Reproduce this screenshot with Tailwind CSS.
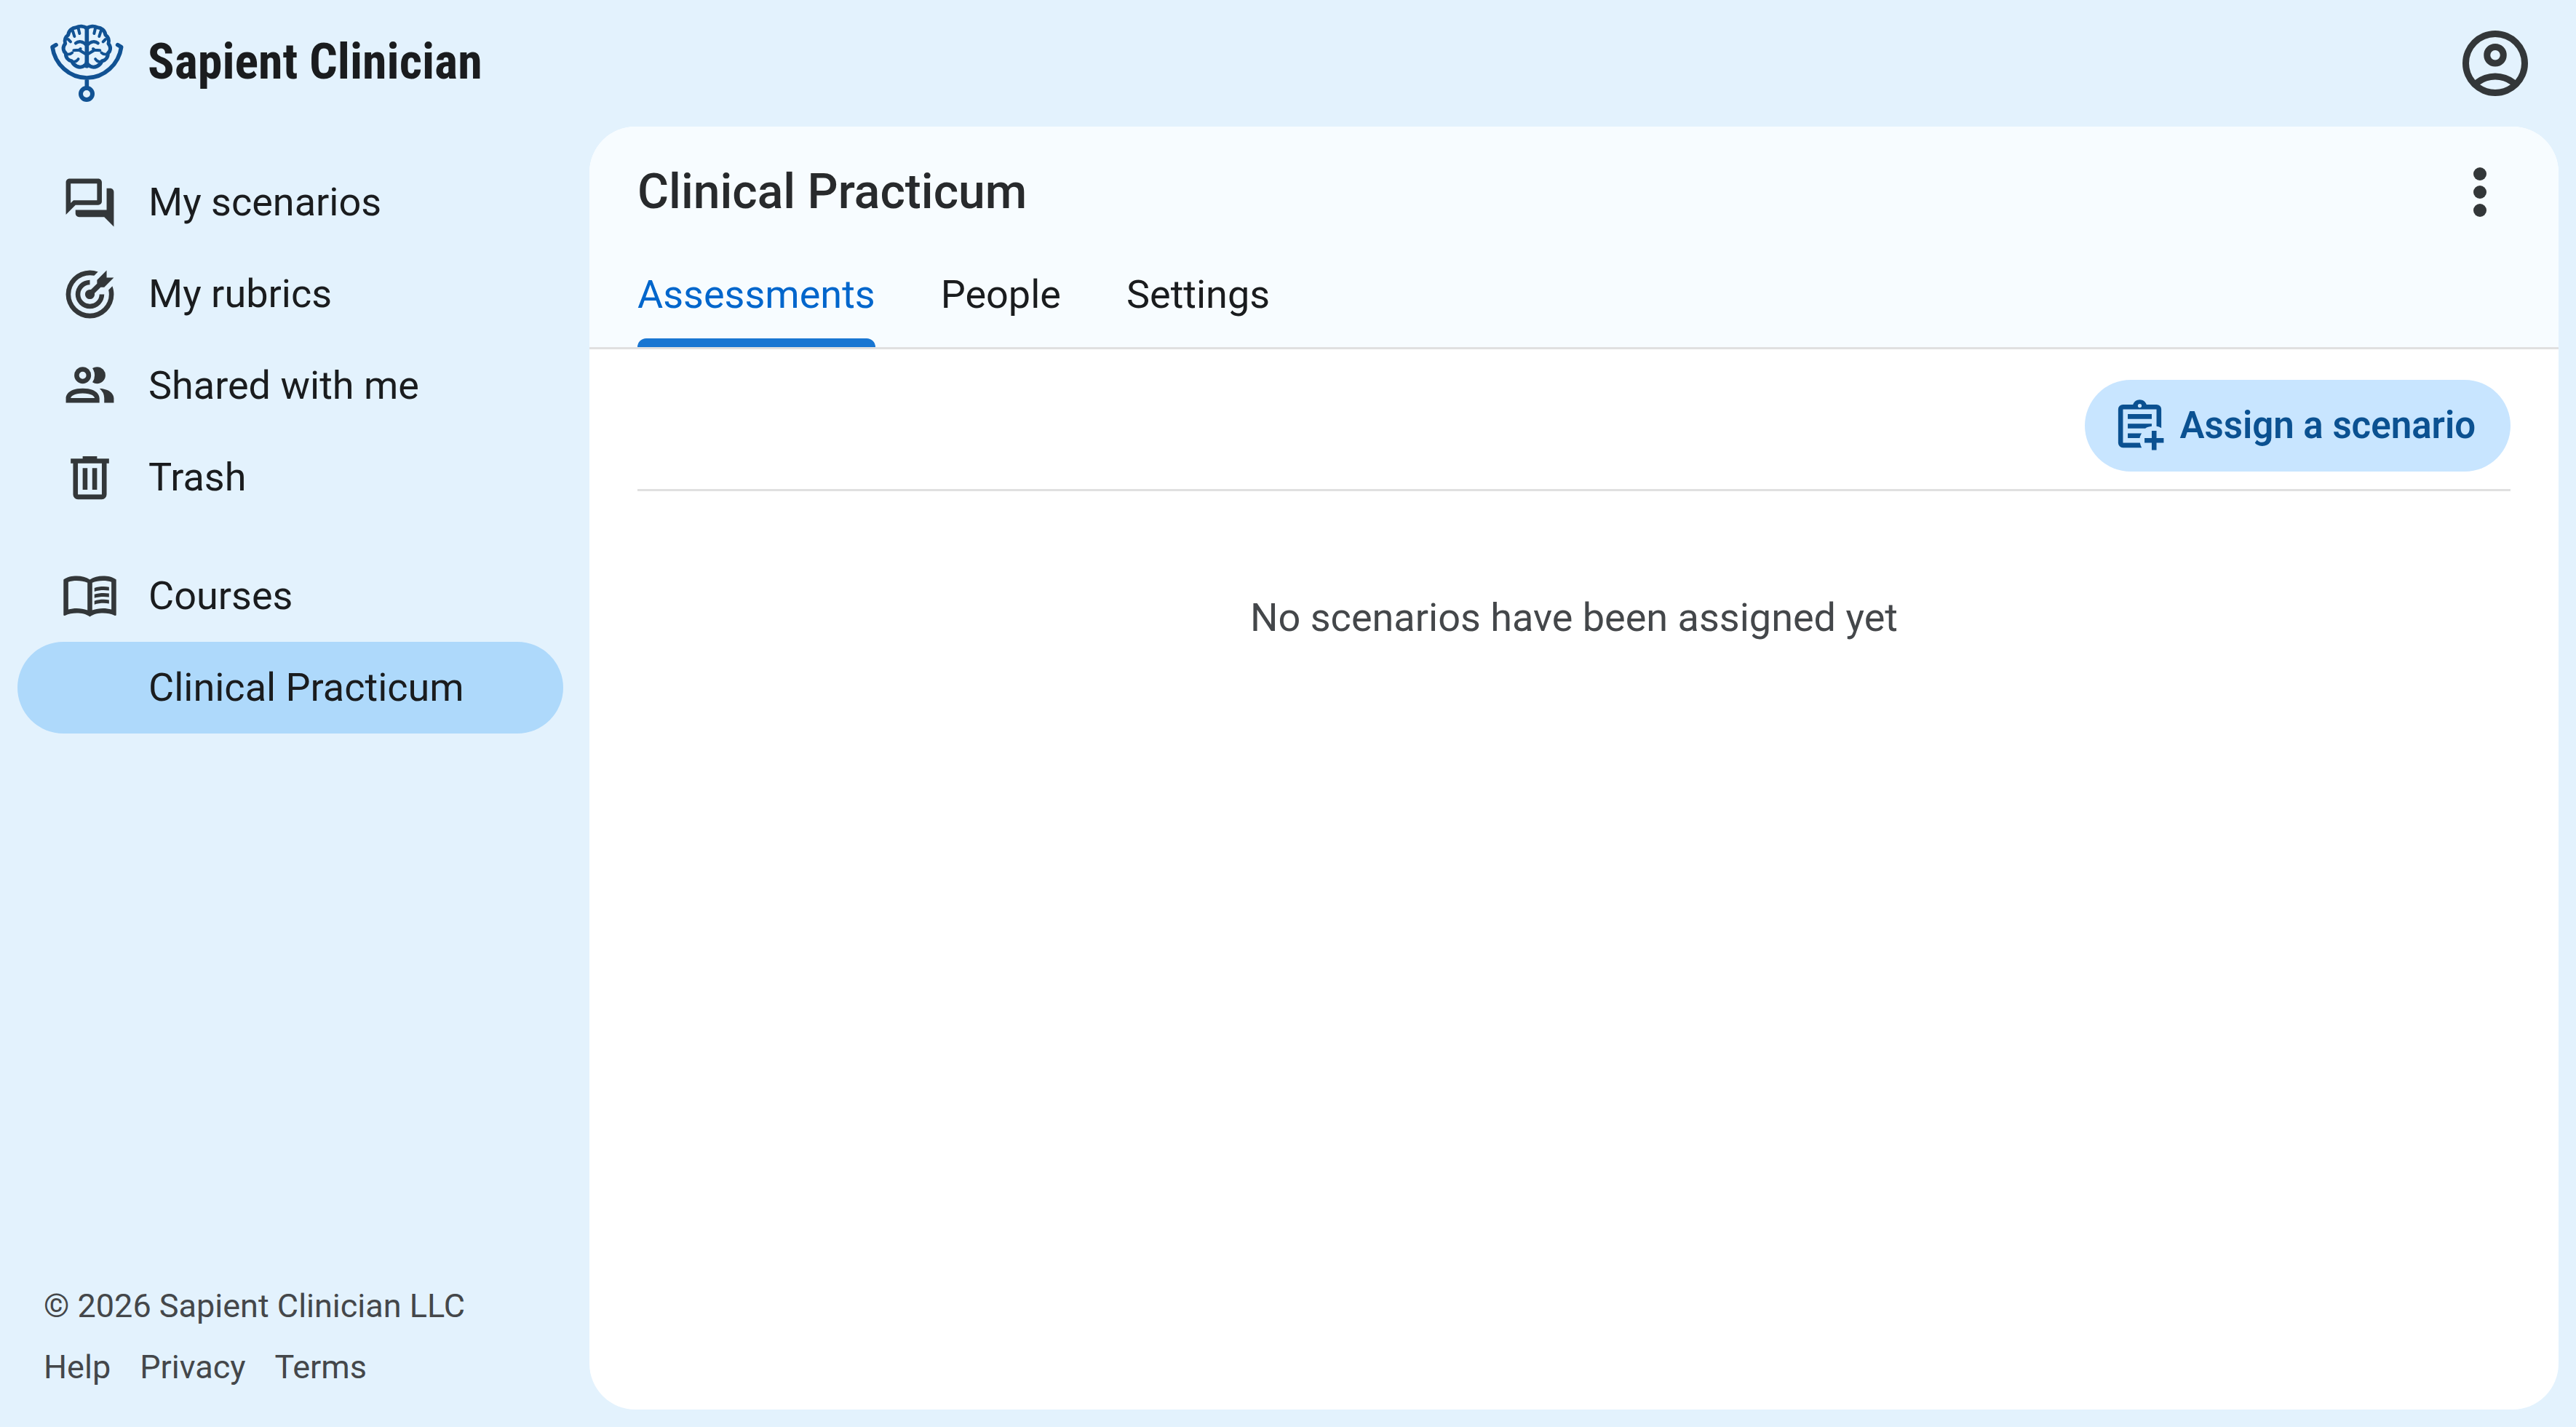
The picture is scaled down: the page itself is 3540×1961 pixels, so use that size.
<!DOCTYPE html>
<html lang="en">

<head>
    <meta charset="UTF-8">
    <meta name="viewport" content="width=device-width, initial-scale=1.0">
    <title>Sapient Clinician</title>
    <script src="https://cdn.jsdelivr.net/npm/@tailwindcss/browser@4"></script>
</head>

<body class="min-h-screen flex flex-col bg-[#e3f2fd] text-[#1a1c1e] text-[54px] leading-[66px] font-['Roboto',sans-serif]">

    <!-- top bar -->
    <header class="h-[174px] flex items-center justify-between pl-[50px] pr-[57px]">
        <a href="#" class="flex items-center gap-[13px]">
            <svg class="w-[140px] h-[130px]" viewBox="0 6 420 390" fill="none" stroke="#115293" stroke-width="15"
                stroke-linecap="round" stroke-linejoin="round" aria-hidden="true">
                <defs>
                    <g id="half">
                        <path d="M208 57C196 47 178 46 164 53C148 54 134 66 131 84C119 93 115 106 119 120C108 132 109 150 121 159C120 176 130 188 146 192C154 212 176 222 194 213C203 208 208 202 208 196" />
                        <path d="M173 57L178 78M150 68L157 90M131 102L141 112" stroke-width="12" />
                        <path d="M162 118C172 109 192 108 206 126" stroke-width="13" />
                        <path d="M154 148L176 146L206 164M176 146L182 141" stroke-width="12" />
                        <path d="M121 162C134 166 142 163 148 157M146 194C158 197 168 191 173 183" stroke-width="11" />
                    </g>
                </defs>
                <use href="#half" />
                <use href="#half" transform="matrix(-1 0 0 1 416 0)" />
                <path d="M208 55V212" stroke-width="17" />
                <path d="M81 125L66 134C76 205 136 261 208 261C280 261 340 205 350 134L335 125M208 261V300" stroke-width="17" />
                <circle cx="207" cy="327" r="24" stroke-width="18" />
            </svg>
            <span class="pb-1 text-[68px] leading-[80px] font-bold font-['Roboto_Condensed','Roboto',sans-serif]">Sapient Clinician</span>
        </a>
        <button type="button" aria-label="Account" class="text-[#333739]">
            <svg class="size-[108px]" viewBox="0 -960 960 960" fill="currentColor"><path d="M234-276q51-39 114-61.5T480-360q69 0 132 22.5T726-276q35-41 54.5-93T800-480q0-133-93.5-226.5T480-800q-133 0-226.5 93.5T160-480q0 59 19.5 111t54.5 93Zm246-164q-59 0-99.5-40.5T340-580q0-59 40.5-99.5T480-720q59 0 99.5 40.5T620-580q0 59-40.5 99.5T480-440Zm0 360q-83 0-156-31.5T197-197q-54-54-85.5-127T80-480q0-83 31.5-156T197-763q54-54 127-85.5T480-880q83 0 156 31.5T763-763q54 54 85.5 127T880-480q0 83-31.5 156T763-197q-54 54-127 85.5T480-80Zm0-80q53 0 100-15.5t86-44.5q-39-29-86-44.5T480-280q-53 0-100 15.5T294-220q39 29 86 44.5T480-160Zm0-360q26 0 43-17t17-43q0-26-17-43t-43-17q-26 0-43 17t-17 43q0 26 17 43t43 17Z" /></svg>
        </button>
    </header>

    <div class="flex-1 flex pr-6 pb-6">

        <!-- sidebar -->
        <aside class="w-[810px] shrink-0 flex flex-col justify-between pt-[41px] pl-6 pr-9">
            <nav>
                <a href="#" class="h-[126px] flex items-center gap-[41px] pl-[60px] rounded-full">
                    <svg class="size-[79px] text-[#333739]" viewBox="0 0 24 24" fill="currentColor"><path d="M15 4v7H5.17L4 12.17V4h11m.5-2h-12C2.67 2 2 2.67 2 3.5V17l4-4h9.5c.83 0 1.5-.67 1.5-1.5v-8c0-.83-.67-1.5-1.5-1.5zM19 6v9H6v1.500C6 17.330 6.670 18 7.500 18H18l4 4V7.500C22 6.670 21.330 6 20.500 6H19z" /></svg>
                    My scenarios
                </a>
                <a href="#" class="h-[126px] flex items-center gap-[41px] pl-[60px] rounded-full">
                    <svg class="size-[79px] text-[#333739]" viewBox="0 0 24 24" fill="currentColor"><path d="M12 2A10 10 0 0 0 2 12a10 10 0 0 0 10 10 10 10 0 0 0 10-10c0-1.160-.210-2.310-.610-3.390l-1.600 1.600c.140.590.210 1.190.210 1.790a8 8 0 0 1-8 8 8 8 0 0 1-8-8 8 8 0 0 1 8-8c.600 0 1.200.070 1.790.210l1.600-1.600C14.310 2.210 13.160 2 12 2m7 0l-4 4v1.500l-2.550 2.550C12.300 10 12.150 10 12 10a2 2 0 0 0-2 2 2 2 0 0 0 2 2 2 2 0 0 0 2-2c0-.150 0-.300-.050-.450L16.500 9H18l4-4h-3V2m-7 4a6 6 0 0 0-6 6 6 6 0 0 0 6 6 6 6 0 0 0 6-6h-2a4 4 0 0 1-4 4 4 4 0 0 1-4-4 4 4 0 0 1 4-4V6z" /></svg>
                    My rubrics
                </a>
                <a href="#" class="h-[126px] flex items-center gap-[41px] pl-[60px] rounded-full">
                    <svg class="size-[79px] text-[#333739]" viewBox="0 0 24 24" fill="currentColor"><path d="M13.070 10.410a5 5 0 0 0 0-5.820A3.390 3.390 0 0 1 15 4a3.500 3.500 0 0 1 0 7 3.390 3.390 0 0 1-1.930-.590M5.500 7.500A3.500 3.500 0 1 1 9 11a3.500 3.500 0 0 1-3.500-3.500m2 0A1.500 1.500 0 1 0 9 6a1.500 1.500 0 0 0-1.500 1.500M16 17v2H2v-2s0-4 7-4 7 4 7 4m-2 0c-.140-.780-1.330-2-5-2s-4.930 1.310-5 2m11.950-4A5.320 5.320 0 0 1 18 17v2h4v-2s0-3.630-6.060-4z" /></svg>
                    Shared with me
                </a>
                <a href="#" class="h-[126px] flex items-center gap-[41px] pl-[60px] rounded-full">
                    <svg class="size-[79px] text-[#333739]" viewBox="0 0 24 24" fill="currentColor"><path d="M9 3v1H4v2h1v13a2 2 0 0 0 2 2h10a2 2 0 0 0 2-2V6h1V4h-5V3H9M7 6h10v13H7V6m2 2v9h2V8H9m4 0v9h2V8h-2z" /></svg>
                    Trash
                </a>
                <a href="#" class="h-[126px] mt-[37px] flex items-center gap-[41px] pl-[60px] rounded-full">
                    <svg class="size-[79px] text-[#333739]" viewBox="0 0 24 24" fill="currentColor" fill-rule="evenodd"><path d="M12 5C10.500 4 8.500 3.500 6.500 3.500S2.450 3.900 1 5v14.650c0 .350.300.500.750.300C3 19.300 4.800 19 6.500 19c1.950 0 4.050.400 5.500 1.500C13.450 19.400 15.550 19 17.500 19c1.700 0 3.500.300 4.750.950.450.200.750.050.750-.300V5c-1.450-1.100-3.500-1.500-5.500-1.500S13.500 4 12 5zM3 6c1-.350 2.200-.500 3.500-.500 1.600 0 3.200.250 4.500.800v11.500c-1.400-.500-3-.800-4.500-.800-1.200 0-2.400.150-3.500.500V6zm10 .300c1.300-.550 2.900-.800 4.500-.800 1.300 0 2.500.150 3.500.500v11.500c-1.100-.350-2.300-.500-3.500-.500-1.500 0-3.100.300-4.500.800V6.300z" /><path d="M13.900 8.500c1.900-.650 4.100-.750 6.100-.400v1.500c-2-.300-4.200-.200-6.100.400zM13.900 11.200c1.900-.650 4.100-.750 6.100-.400v1.500c-2-.300-4.200-.200-6.100.400zM13.900 13.900c1.900-.650 4.100-.750 6.100-.400V15c-2-.300-4.200-.200-6.100.400z" /></svg>
                    Courses
                </a>
                <a href="#" aria-current="page" class="h-[126px] flex items-center pl-[180px] rounded-full bg-[#aed9fb]">Clinical Practicum</a>
            </nav>

            <footer class="pl-9 pb-4 text-[45px] leading-[84px] text-[#44474a]">
                <p>© 2026 Sapient Clinician LLC</p>
                <div class="flex gap-10">
                    <a href="#">Help</a>
                    <a href="#">Privacy</a>
                    <a href="#">Terms</a>
                </div>
            </footer>
        </aside>

        <!-- course panel -->
        <main class="flex-1 bg-white rounded-[63px] overflow-hidden">
            <div class="bg-[#f7fcff] border-b-3 border-[#e0e0e0] px-[66px]">
                <div class="h-[180px] flex items-center justify-between">
                    <h1 class="text-[66px] leading-[80px] font-medium text-[#282a2c]">Clinical Practicum</h1>
                    <button type="button" aria-label="More options" class="w-[84px] flex justify-center text-[#333739]">
                        <svg class="w-[18px] h-[68px]" viewBox="0 0 18 68" fill="currentColor"><circle cx="9" cy="9" r="9" /><circle cx="9" cy="34" r="9" /><circle cx="9" cy="59" r="9" /></svg>
                    </button>
                </div>
                <div role="tablist" class="h-[123px] flex gap-[90px]">
                    <button type="button" role="tab" aria-selected="true" class="flex flex-col justify-between pt-[18px] text-[#0066cc]">
                        Assessments
                        <span class="w-full h-3 rounded-t-[12px] bg-[#1976d2]"></span>
                    </button>
                    <button type="button" role="tab" aria-selected="false" class="flex pt-[18px]">People</button>
                    <button type="button" role="tab" aria-selected="false" class="flex pt-[18px]">Settings</button>
                </div>
            </div>

            <div class="px-[66px]">
                <div class="flex justify-end pt-[42px] pb-6 border-b-3 border-[#e0e0e0]">
                    <button type="button" class="h-[126px] flex items-center gap-[15px] pl-9 pr-[48px] rounded-full bg-[#c8e5ff] text-[#0b5191] text-[51px] font-semibold">
                        <svg class="size-[79px]" viewBox="0 0 24 24" fill="currentColor" fill-rule="evenodd"><path d="M21 12.800V5a2 2 0 0 0-2-2h-4.180C14.400 1.840 13.300 1 12 1s-2.400.840-2.820 2H5a2 2 0 0 0-2 2v14a2 2 0 0 0 2 2h7.800a6 6 0 0 1-.700-2H5V5h14v7.100a6 6 0 0 1 2 .700zM12 2.700a.800.800 0 1 1 0 1.600.800.800 0 0 1 0-1.600zM7 7h10v2H7zM7 11h10v1.100c-1.100.150-2 .400-2.700.900H7zM7 15h5.800c-.400.600-.700 1.300-.800 2H7zM17 14h2v3h3v2h-3v3h-2v-3h-3v-2h3z" /></svg>
                        Assign a scenario
                    </button>
                </div>
                <p class="pt-[141px] text-center text-[#44474a]">No scenarios have been assigned yet</p>
            </div>
        </main>
    </div>

</body>

</html>
